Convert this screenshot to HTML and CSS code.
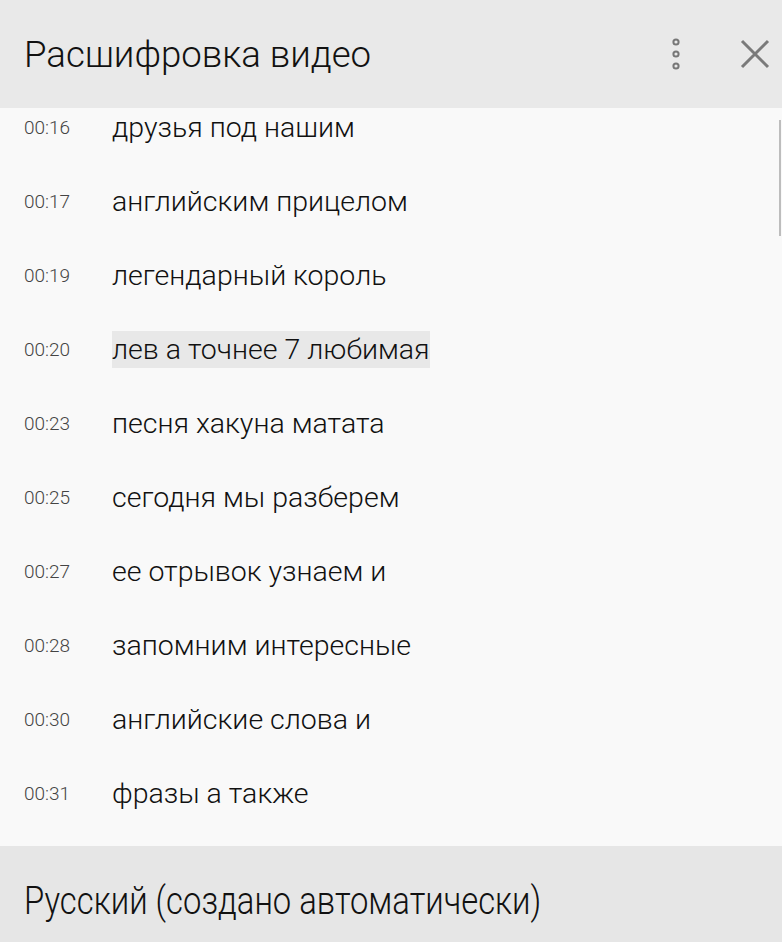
FILE: index.html
```html
<!DOCTYPE html>
<html lang="ru">
<head>
  <meta charset="UTF-8">
  <title>Расшифровка видео</title>
  <link rel="stylesheet" href="styles.css">
</head>
<body>
  <div class="panel">
    <div class="panel-header">
      <h1 class="panel-title">Расшифровка видео</h1>
      <div class="header-actions">
        <button class="icon-btn" aria-label="Ещё">
          <svg width="12" height="36" viewBox="0 0 12 36">
            <circle cx="6" cy="6" r="2.6" fill="none" stroke="#777" stroke-width="2"/>
            <circle cx="6" cy="18" r="2.6" fill="none" stroke="#777" stroke-width="2"/>
            <circle cx="6" cy="30" r="2.6" fill="none" stroke="#777" stroke-width="2"/>
          </svg>
        </button>
        <button class="icon-btn" aria-label="Закрыть">
          <svg width="30" height="30" viewBox="0 0 30 30">
            <path d="M2 2 L28 28 M28 2 L2 28" stroke="#7a7a7a" stroke-width="3"/>
          </svg>
        </button>
      </div>
    </div>

    <div class="transcript">
      <div class="scroll-thumb"></div>
      <div class="rows">
        <div class="row"><span class="time">00:16</span><span class="text">друзья под нашим</span></div>
        <div class="row"><span class="time">00:17</span><span class="text">английским прицелом</span></div>
        <div class="row"><span class="time">00:19</span><span class="text">легендарный король</span></div>
        <div class="row"><span class="time">00:20</span><span class="text active">лев а точнее 7 любимая</span></div>
        <div class="row"><span class="time">00:23</span><span class="text">песня хакуна матата</span></div>
        <div class="row"><span class="time">00:25</span><span class="text">сегодня мы разберем</span></div>
        <div class="row"><span class="time">00:27</span><span class="text">ее отрывок узнаем и</span></div>
        <div class="row"><span class="time">00:28</span><span class="text">запомним интересные</span></div>
        <div class="row"><span class="time">00:30</span><span class="text">английские слова и</span></div>
        <div class="row"><span class="time">00:31</span><span class="text">фразы а также</span></div>
      </div>
    </div>

    <div class="panel-footer">
      <span class="lang">Русский (создано автоматически)</span>
    </div>
  </div>
</body>
</html>
```

FILE: styles.css
```css
* {
  box-sizing: border-box;
}
body {
  margin: 0;
  font-family: Roboto, 'Noto Sans', sans-serif;
  background: #f9f9f9;
  color: #222;
}

.panel {
  display: flex;
  flex-direction: column;
  height: 942px;
  width: 782px;
}

.panel-header {
  height: 108px;
  flex: none;
  background: #e9e9e9;
  display: flex;
  align-items: center;
  justify-content: space-between;
  padding: 0 12px 0 24px;
}
.panel-title {
  margin: 0;
  font-size: 36.6px;
  font-weight: 300;
  color: #111;
}
.header-actions {
  display: flex;
  align-items: center;
  gap: 58px;
}
.icon-btn {
  background: none;
  border: 0;
  padding: 0;
  display: flex;
}

.transcript {
  flex: 1;
  overflow: hidden;
  position: relative;
  background: #f9f9f9;
}
.scroll-thumb {
  position: absolute;
  right: 1px;
  top: 12px;
  width: 2px;
  height: 116px;
  background: #bdbdbd;
}
.rows {
  margin-top: -18px;
  padding-left: 24px;
}
.row {
  height: 74px;
  display: flex;
  align-items: center;
}
.time {
  width: 88px;
  flex: none;
  font-size: 19px;
  font-weight: 300;
  color: #444;
}
.text {
  font-size: 28.5px;
  font-weight: 300;
  color: #111;
  padding: 2px 0;
}
.text.active {
  background: #e8e8e8;
}

.panel-footer {
  height: 96px;
  flex: none;
  background: #e6e6e6;
  display: flex;
  align-items: center;
  padding: 14px 24px 0;
}
.lang {
  font-size: 34px;
  font-weight: 300;
  color: #111;
  display: inline-block;
  transform: scale(0.965, 1.12);
  transform-origin: left center;
}
```
